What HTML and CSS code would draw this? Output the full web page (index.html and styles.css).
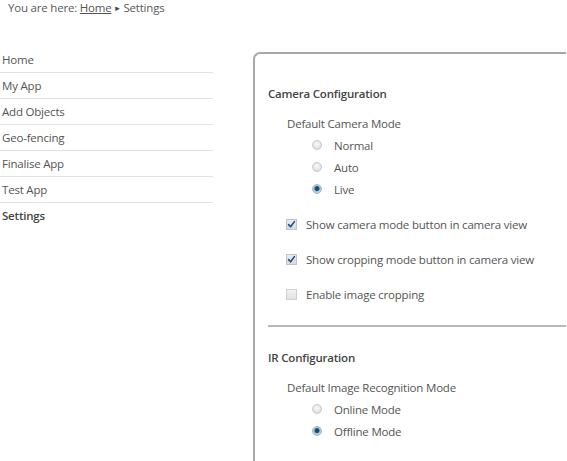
FILE: index.html
```html
<!DOCTYPE html>
<html>
<head>
<meta charset="utf-8">
<link rel="stylesheet" href="styles.css">
</head>
<body>
<div class="crumbs">You are here: <a href="#">Home</a> <span class="sep">&#9656;</span> Settings</div>
<div class="main">
  <ul class="nav">
    <li>Home</li>
    <li>My App</li>
    <li>Add Objects</li>
    <li>Geo-fencing</li>
    <li>Finalise App</li>
    <li>Test App</li>
    <li class="active">Settings</li>
  </ul>
  <div class="panel">
    <h3 class="heading">Camera Configuration</h3>
    <div class="label">Default Camera Mode</div>
    <div class="radio"><span class="dot"></span>Normal</div>
    <div class="radio"><span class="dot"></span>Auto</div>
    <div class="radio"><span class="dot on"></span>Live</div>
    <div class="checks">
      <div class="check"><span class="box"><svg viewBox="0 0 11 11" width="11" height="11"><path d="M2.6 5.6 L4.6 7.8 L8.4 2.6" fill="none" stroke="#234e86" stroke-width="1.6" stroke-linecap="round" stroke-linejoin="round"/></svg></span>Show camera mode button in camera view</div>
      <div class="check"><span class="box"><svg viewBox="0 0 11 11" width="11" height="11"><path d="M2.6 5.6 L4.6 7.8 L8.4 2.6" fill="none" stroke="#234e86" stroke-width="1.6" stroke-linecap="round" stroke-linejoin="round"/></svg></span>Show cropping mode button in camera view</div>
      <div class="check"><span class="box empty"></span>Enable image cropping</div>
    </div>
    <hr class="divider">
    <h3 class="heading">IR Configuration</h3>
    <div class="label">Default Image Recognition Mode</div>
    <div class="radio"><span class="dot"></span>Online Mode</div>
    <div class="radio"><span class="dot on"></span>Offline Mode</div>
  </div>
</div>
</body>
</html>
```
FILE: styles.css
```css
html, body {
  margin: 0;
  padding: 0;
  background: #fff;
  overflow: hidden;
}
body {
  font-family: "Open Sans", "DejaVu Sans", sans-serif;
  font-size: 11.5px;
  letter-spacing: -0.2px;
  color: #555;
  white-space: nowrap;
}
.crumbs {
  padding-left: 8px;
  height: 16px;
  line-height: 16px;
  font-size: 11.5px;
  color: #5a5a5a;
}
.crumbs a {
  color: #555;
  text-decoration: underline;
}
.crumbs .sep {
  font-size: 9px;
  position: relative;
  top: -1px;
  margin: 0 1px;
  color: #444;
}
.main {
  display: flex;
  align-items: flex-start;
  margin-top: 31px;
}
.nav {
  list-style: none;
  margin: 0;
  padding: 0;
  width: 213px;
  flex: none;
}
.nav li {
  height: 25px;
  line-height: 25px;
  padding-left: 2px;
  border-bottom: 1px solid #e2e2e2;
}
.nav li.active {
  font-weight: 600;
  color: #444;
  border-bottom: none;
}
.panel {
  margin-left: 40px;
  margin-top: 5px;
  width: 298px;
  height: 377px;
  border-top: 2px solid #a8a8a8;
  border-left: 2px solid #a8a8a8;
  border-top-left-radius: 7px;
  padding: 30px 0 0 13px;
}
.heading {
  margin: 0;
  font-size: 11.5px;
  font-weight: 600;
  color: #444;
  line-height: 20px;
}
.label {
  margin-top: 10px;
  margin-left: 19px;
  line-height: 20px;
}
.radio {
  display: flex;
  align-items: center;
  height: 22px;
  margin-left: 44px;
}
.dot {
  width: 10px;
  height: 10px;
  border-radius: 50%;
  box-sizing: border-box;
  border: 1px solid #c9c9c9;
  background: radial-gradient(circle at 50% 40%, #fafafa 0%, #e4e4e4 60%, #d0d0d0 100%);
  margin-right: 12px;
  flex: none;
}
.dot.on {
  border-color: #9fb6c6;
  background: radial-gradient(circle at 50% 45%, #0f3f5e 0%, #1e5a7e 35%, #a9c6d8 50%, #dde8ef 100%);
}
.checks {
  margin-top: 14px;
}
.check {
  display: flex;
  align-items: center;
  height: 20px;
  margin-left: 18px;
  margin-bottom: 15px;
}
.box {
  width: 11px;
  height: 11px;
  box-sizing: border-box;
  border: 1px solid #bfc3cc;
  background: linear-gradient(#e9ebf2, #d6dae4);
  margin-right: 9px;
  flex: none;
  display: flex;
}
.box svg {
  margin: -1px;
}
.box.empty {
  border-color: #d0d0d0;
  background: linear-gradient(#f2f2f2, #e2e2e2);
}
.divider {
  margin: 21px 0 21px 0;
  border: none;
  border-top: 2px solid #b9b9b9;
  height: 0;
}
```
